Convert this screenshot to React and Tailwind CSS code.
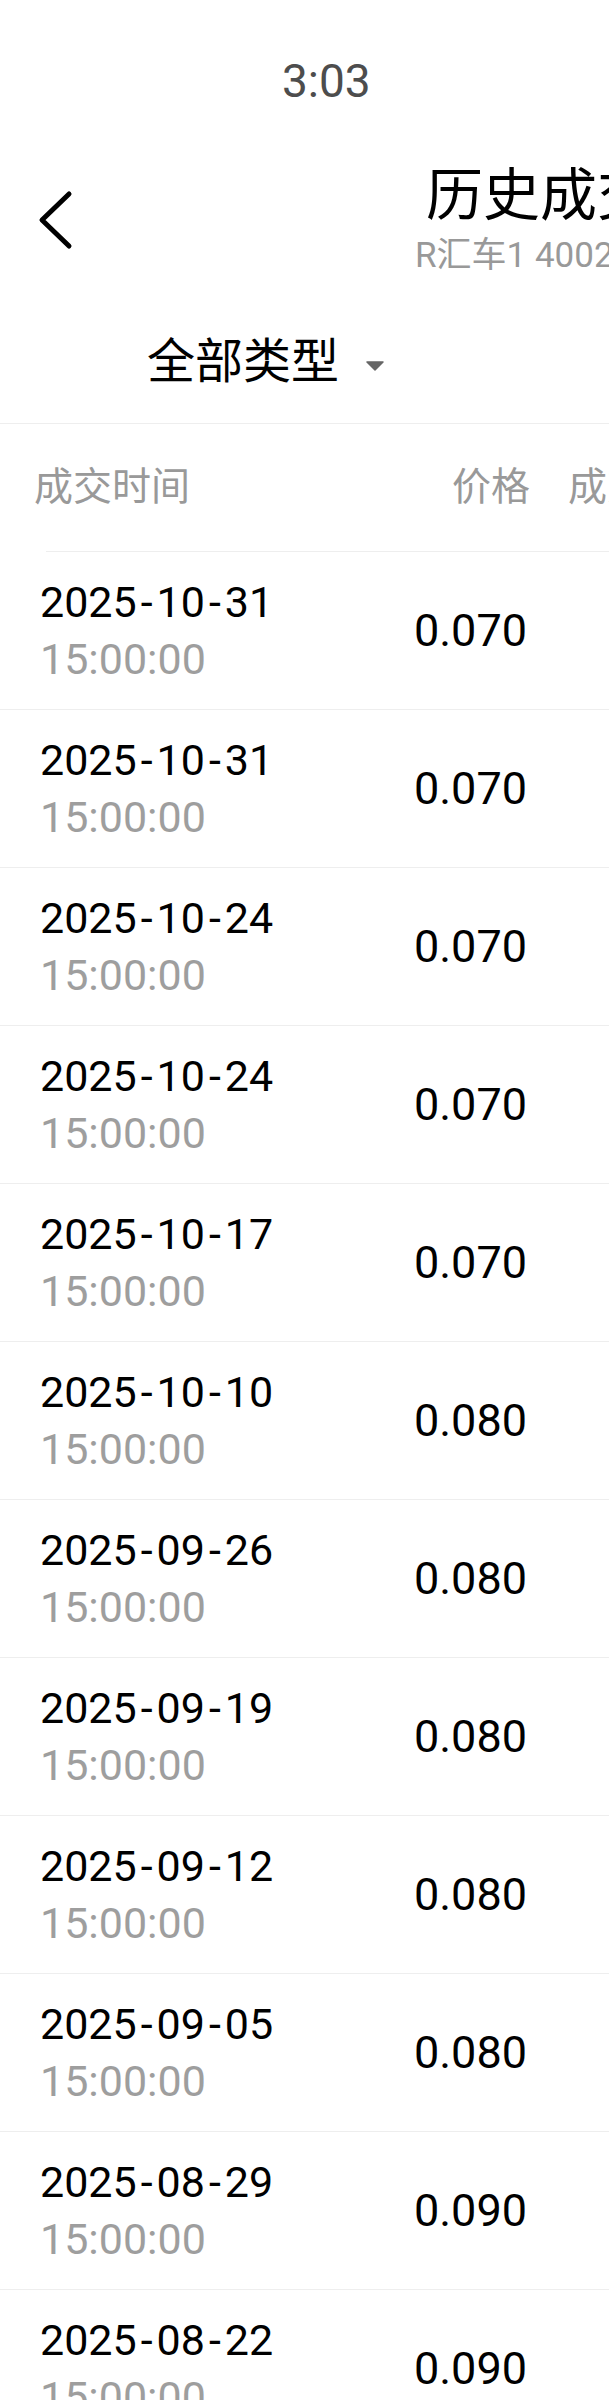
import React from "react";

const rows = [
  { date: "2025-10-31", price: "0.070" },
  { date: "2025-10-31", price: "0.070" },
  { date: "2025-10-24", price: "0.070" },
  { date: "2025-10-24", price: "0.070" },
  { date: "2025-10-17", price: "0.070" },
  { date: "2025-10-10", price: "0.080" },
  { date: "2025-09-26", price: "0.080" },
  { date: "2025-09-19", price: "0.080" },
  { date: "2025-09-12", price: "0.080" },
  { date: "2025-09-05", price: "0.080" },
  { date: "2025-08-29", price: "0.090" },
  { date: "2025-08-22", price: "0.090" },
];

const font = "font-['Roboto','Noto_Sans_CJK_SC',sans-serif]";

// the app's font draws a wider dash, so pad the hyphens a bit
const DateText = ({ value }) => {
  const parts = value.split("-");
  return (
    <span className="text-black">
      {parts.map((p, i) => (
        <React.Fragment key={i}>
          {i > 0 && <span className="mx-[4px]">-</span>}
          {p}
        </React.Fragment>
      ))}
    </span>
  );
};

const App = () => {
  return (
    <div className={`w-full overflow-hidden bg-white whitespace-nowrap ${font}`}>
      {/* status bar */}
      <div className="h-[145px] pt-[51px] pl-[282px]">
        <span className="text-[46px] leading-[60px] text-[#4d4d4d]">3:03</span>
      </div>

      {/* nav bar */}
      <div className="h-[150px] flex items-center pl-[34px]">
        <svg width="40" height="64" viewBox="0 0 40 64" className="shrink-0">
          <path d="M35 6 L8 32 L35 58" fill="none" stroke="#000" strokeWidth="5" strokeLinecap="round" strokeLinejoin="round" />
        </svg>
        <div className="ml-[341px] flex flex-col shrink-0">
          <span className="ml-[11px] text-[57px] leading-[64px] text-black">历史成交</span>
          <span className="mt-[8px] text-[35px] leading-[40px] text-[#999999]">R汇车1 400200</span>
        </div>
      </div>

      {/* filter */}
      <div className="h-[129px] pt-[6px] border-b border-[#eeeeee] flex items-center pl-[147px]">
        <span className="text-[48px] leading-[60px] text-black">全部类型</span>
        <svg width="18" height="10" viewBox="0 0 18 10" className="ml-[27px] mt-[8px] shrink-0">
          <path d="M1 1 L17 1 L9 9 Z" fill="#666666" stroke="#666666" strokeWidth="1.5" strokeLinejoin="round" />
        </svg>
      </div>

      {/* table header */}
      <div className="h-[127px] flex items-center pl-[34px] text-[39px] text-[#999999]">
        <span className="w-[336px] shrink-0">成交时间</span>
        <span className="w-[160px] shrink-0 text-right">价格</span>
        <span className="ml-[38px] shrink-0">成交量</span>
      </div>
      <div className="h-px ml-[46px] bg-[#eeeeee]" />

      {/* rows */}
      {rows.map((row, i) => (
        <div key={i} className="h-[158px] border-b border-[#eeeeee] flex items-center pl-[40px]">
          <div className="w-[330px] shrink-0 flex flex-col text-[43px] leading-[57px]">
            <DateText value={row.date} />
            <span className="text-[#9e9e9e]">15:00:00</span>
          </div>
          <span className="w-[157px] shrink-0 text-right text-[45px] leading-[57px] text-black">{row.price}</span>
        </div>
      ))}
    </div>
  );
};

export default App;
